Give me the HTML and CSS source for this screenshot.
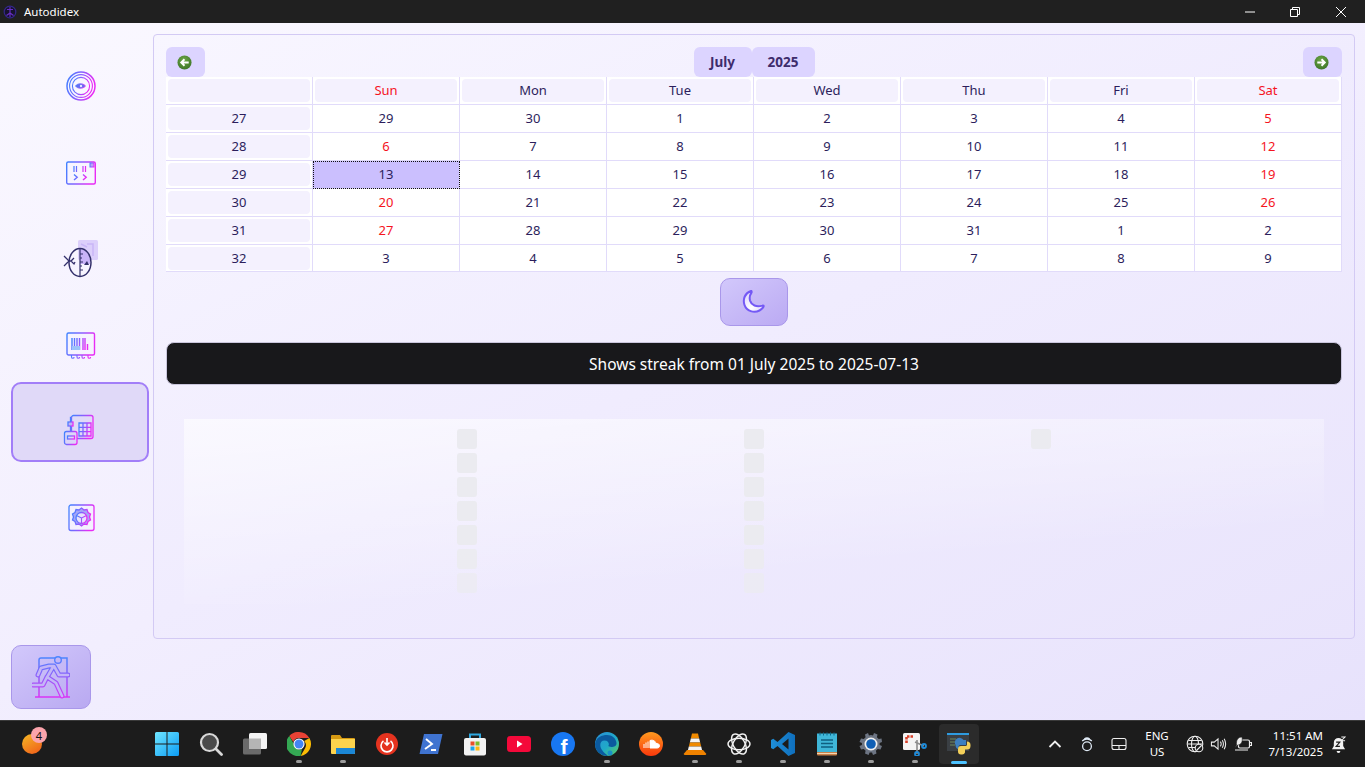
FILE: index.html
```html
<!DOCTYPE html>
<html lang="en">
<head>
<meta charset="utf-8">
<title>Autodidex</title>
<link rel="stylesheet" href="styles.css">
</head>
<body>
<svg class="defs" aria-hidden="true">
  <defs>
    <linearGradient id="gh" x1="0" y1="0" x2="1" y2="0.25"><stop offset="0" stop-color="#3f84ff"/><stop offset="0.5" stop-color="#8560ff"/><stop offset="1" stop-color="#e82cf5"/></linearGradient>
    <linearGradient id="gx" gradientUnits="userSpaceOnUse" x1="0" y1="2" x2="0" y2="44"><stop offset="0" stop-color="#4a86ff"/><stop offset="1" stop-color="#e030f5"/></linearGradient>
    <linearGradient id="moon" x1="0" y1="0" x2="1" y2="1"><stop offset="0" stop-color="#d8cdfd"/><stop offset="0.6" stop-color="#fff"/><stop offset="1" stop-color="#d8cdfd"/></linearGradient>
    <linearGradient id="win" x1="0" y1="0" x2="1" y2="1"><stop offset="0" stop-color="#6fe6ff"/><stop offset="1" stop-color="#0c9cf5"/></linearGradient>
    <linearGradient id="ball" x1="0.2" y1="0" x2="0.8" y2="1"><stop offset="0" stop-color="#f5b324"/><stop offset="1" stop-color="#f0601a"/></linearGradient>
    <linearGradient id="sc" x1="0" y1="0" x2="0" y2="1"><stop offset="0" stop-color="#ff9a1f"/><stop offset="1" stop-color="#f9380c"/></linearGradient>
    <linearGradient id="edge" x1="0" y1="0" x2="1" y2="1"><stop offset="0" stop-color="#2b8fd6"/><stop offset="0.55" stop-color="#1fa9c9"/><stop offset="1" stop-color="#5fd35a"/></linearGradient>
    <linearGradient id="vs" x1="0" y1="0" x2="1" y2="0"><stop offset="0" stop-color="#1f8fd8"/><stop offset="1" stop-color="#0f6fbd"/></linearGradient>
    <radialGradient id="orb" cx="0.45" cy="0.35" r="0.7"><stop offset="0" stop-color="#6ea848"/><stop offset="1" stop-color="#3b7326"/></radialGradient>
  </defs>
</svg>

<header class="titlebar">
  <svg class="app-logo" viewBox="0 0 14 14"><circle cx="7" cy="7" r="5.800" fill="#17122f" stroke="#33278a" stroke-width="1.200"/><path d="M7 2v10M4 4.500h6M3.500 10.500L7 8l3.500 2.500" fill="none" stroke="#6a2fc8" stroke-width="1.100"/></svg>
  <span class="app-name">Autodidex</span>
  <div class="win-controls">
    <svg class="wc wc-min" viewBox="0 0 12 12"><path d="M1 6h10" stroke="#fff" fill="none"/></svg>
    <svg class="wc wc-max" viewBox="0 0 12 12"><path d="M1.500 3.500h7v7h-7zM3.500 3.500v-2h7v7h-2" stroke="#fff" fill="none"/></svg>
    <svg class="wc wc-close" viewBox="0 0 12 12"><path d="M1 1l10 10M11 1L1 11" stroke="#fff" fill="none"/></svg>
  </div>
</header>

<div class="app">
  <aside class="sidebar">
    <nav class="nav">
      <div class="nav-item">
        <svg class="nav-icon" viewBox="0 0 30 30" fill="none" stroke="url(#gh)">
          <circle cx="15" cy="15" r="14" stroke-width="1.500"/><circle cx="15" cy="15" r="11.400" stroke-width="1.100"/><circle cx="15" cy="15" r="8.600" stroke-width="1.100"/>
          <path d="M9.500 15c2-2.800 7.500-3.200 10 0-2.500 3.200-8 2.800-10 0z" fill="#6070f0" stroke-width=".9"/><circle cx="15" cy="15" r="1.200" fill="#e9e6ff" stroke="none"/>
        </svg>
      </div>
      <div class="nav-item">
        <svg class="nav-icon" viewBox="0 0 30 30" fill="none" stroke="url(#gh)" stroke-width="1.400">
          <rect x="0.700" y="4" width="28.600" height="22" rx="1.500"/><path d="M2.400 4v22" stroke-width="1.700"/>
          <rect x="24" y="5" width="4" height="4" fill="#b9a6f9" stroke-width="1"/>
          <path d="M8 8v6M10.500 8v6M17 8v6M19.500 8v6" stroke-width="1.200"/><path d="M8 16.500l3.200 2.700L8 22M17 16.500l3.200 2.700L17 22" stroke-width="1.400"/>
        </svg>
      </div>
      <div class="nav-item">
        <svg class="nav-icon nav-icon-tall" viewBox="0 0 36 42" fill="none">
          <rect x="15" y="1" width="20" height="20" rx="1.500" fill="#dccffb"/><path d="M18 5l6 3M24 5h6v12" stroke="#c9b6f7" stroke-width="1.500"/>
          <path d="M17 9.500a10.500 14 0 0 1 10 11.500v4H17z" fill="#c9b3f8"/>
          <ellipse cx="17" cy="23.500" rx="11" ry="14" stroke="#33306b" stroke-width="1.500"/>
          <path d="M17 9.500v28M17 15h3M17 19h2M17 23h3M17 27h2M17 31h3" stroke="#33306b" stroke-width="1.200"/>
          <path d="M1 17l5 5-5 5M5 22h3l3-3M8 22l3 3 1-2" stroke="#33306b" stroke-width="1.300"/><path d="M21 26l3-4 2 4z" fill="#33306b"/>
        </svg>
      </div>
      <div class="nav-item">
        <svg class="nav-icon" viewBox="0 0 30 30" fill="none" stroke="url(#gh)" stroke-width="1.400">
          <rect x="1" y="3" width="27.500" height="22" rx="1.500"/><path d="M1 5.200h27.500" stroke-width="1.800"/>
          <path d="M6 8v12M8.500 8v12M11 8v12M13.500 8v12M17 8v12M19 8v12M21.500 14v6" stroke-width="1.400"/>
          <path d="M6 16h8v4H6z" fill="#9dc3fa" stroke="none"/>
          <path d="M5.500 25v2a1.300 1.300 0 0 0 2.600 0M11 25v2a1.300 1.300 0 0 0 2.600 0M16 25v2a1.300 1.300 0 0 0 2.600 0M22 25v2a1.300 1.300 0 0 0 2.600 0" stroke-width="1.100"/>
        </svg>
      </div>
      <div class="nav-item nav-item-active">
        <svg class="nav-icon nav-icon-table" viewBox="0 0 32 32" fill="none" stroke="url(#gh)" stroke-width="1.300">
          <rect x="8.500" y="1.500" width="21.500" height="23" rx="2"/>
          <path d="M16 9h12v13H16zM16 13.300h12M16 17.700h12M20 9v13M24 9v13"/>
          <rect x="5" y="8" width="5" height="4" fill="#b9b6f5"/><path d="M7.500 12v5.500M7.500 8V3.500h1"/>
          <rect x="1.500" y="17.500" width="12.500" height="13" rx="2" fill="#dcd5f8"/><rect x="4.500" y="22" width="7" height="3"/>
        </svg>
      </div>
      <div class="nav-item">
        <svg class="nav-icon" viewBox="0 0 30 30" fill="none" stroke="url(#gh)" stroke-width="1.300">
          <rect x="3" y="2" width="25" height="25.500" rx="2"/>
          <path d="M15.500 5l2.500 2 3-.5 1 3 2.500 1.500-1 3 1 3-2.500 1.500-1 3-3-.5-2.500 2-2.500-2-3 .5-1-3-2.500-1.500 1-3-1-3 2.500-1.500 1-3 3 .5z" fill="#a4a6f8"/>
          <circle cx="15.500" cy="15" r="5.500" fill="#e6e2fd"/><path d="M15.500 15v5.500M15.500 15l-5-2.500M15.500 15l5-2.500" stroke-width="1.100"/>
        </svg>
      </div>
    </nav>
    <button class="exit-btn" type="button" aria-label="Exit">
      <svg class="exit-icon" viewBox="0 0 38 44" fill="none">
        <path d="M7 42V5a2 2 0 0 1 2-2h26v39M3 42h35" stroke="url(#gx)" stroke-width="1.500"/>
        <circle cx="26" cy="5" r="3.300" fill="#c4b6f7" stroke="url(#gx)" stroke-width="1.400"/>
        <path d="M6 20l3-7 8-2h5l5 9h9M21 12l-7 12-3 6H1M15 22l9 6 6 13" stroke="url(#gx)" stroke-width="5" stroke-linecap="round" stroke-linejoin="round"/>
        <path d="M6 20l3-7 8-2h5l5 9h9M21 12l-7 12-3 6H1M15 22l9 6 6 13" stroke="#c4b6f7" stroke-width="2.600" stroke-linecap="round" stroke-linejoin="round"/>
      </svg>
    </button>
  </aside>

  <main class="panel">
    <div class="cal-head">
      <button class="nav-btn" type="button" aria-label="Previous month">
        <svg class="arrow" viewBox="0 0 16 16"><circle cx="8" cy="8" r="7.500" fill="url(#orb)"/><path d="M12.500 8H5M8 4.500L4.500 8 8 11.500" fill="none" stroke="#fff" stroke-width="2"/></svg>
      </button>
      <div class="cal-title"><span class="month">July</span><span class="year">2025</span></div>
      <button class="nav-btn" type="button" aria-label="Next month">
        <svg class="arrow" viewBox="0 0 16 16"><circle cx="8" cy="8" r="7.500" fill="url(#orb)"/><path d="M3.500 8H11M8 4.500L11.500 8 8 11.500" fill="none" stroke="#fff" stroke-width="2"/></svg>
      </button>
    </div>

    <div class="calendar">
      <div class="cell"><span class="chip"></span></div>
      <div class="cell"><span class="chip red">Sun</span></div>
      <div class="cell"><span class="chip">Mon</span></div>
      <div class="cell"><span class="chip">Tue</span></div>
      <div class="cell"><span class="chip">Wed</span></div>
      <div class="cell"><span class="chip">Thu</span></div>
      <div class="cell"><span class="chip">Fri</span></div>
      <div class="cell"><span class="chip red">Sat</span></div>

      <div class="cell"><span class="chip">27</span></div>
      <div class="cell">29</div><div class="cell">30</div><div class="cell">1</div><div class="cell">2</div><div class="cell">3</div><div class="cell">4</div><div class="cell red">5</div>

      <div class="cell"><span class="chip">28</span></div>
      <div class="cell red">6</div><div class="cell">7</div><div class="cell">8</div><div class="cell">9</div><div class="cell">10</div><div class="cell">11</div><div class="cell red">12</div>

      <div class="cell"><span class="chip">29</span></div>
      <div class="cell selected">13</div><div class="cell">14</div><div class="cell">15</div><div class="cell">16</div><div class="cell">17</div><div class="cell">18</div><div class="cell red">19</div>

      <div class="cell"><span class="chip">30</span></div>
      <div class="cell red">20</div><div class="cell">21</div><div class="cell">22</div><div class="cell">23</div><div class="cell">24</div><div class="cell">25</div><div class="cell red">26</div>

      <div class="cell"><span class="chip">31</span></div>
      <div class="cell red">27</div><div class="cell">28</div><div class="cell">29</div><div class="cell">30</div><div class="cell">31</div><div class="cell">1</div><div class="cell">2</div>

      <div class="cell"><span class="chip">32</span></div>
      <div class="cell">3</div><div class="cell">4</div><div class="cell">5</div><div class="cell">6</div><div class="cell">7</div><div class="cell">8</div><div class="cell">9</div>
    </div>

    <button class="moon-btn" type="button" aria-label="Streak">
      <svg class="moon-icon" viewBox="0 0 26 26"><path d="M10 2C4 4 1.500 10 3.500 16c2 6 9.500 8.500 15 5.500 1.800-1 3.200-2.300 4-3.800.5-1-.3-1.400-1.200-1.100-6 1.800-10.800-.3-12.300-5-.7-2.800-.2-5.600 1.500-8 .5-1-.2-1.900-.5-1.600z" fill="url(#moon)" stroke="#7459f5" stroke-width="2" stroke-linejoin="round"/></svg>
    </button>

    <div class="streak-bar">Shows streak from 01 July 2025 to 2025-07-13</div>

    <div class="heat">
      <div class="heat-col"><i></i><i></i><i></i><i></i><i></i><i></i><i></i></div>
      <div class="heat-col"><i></i><i></i><i></i><i></i><i></i><i></i><i></i></div>
      <div class="heat-col"><i></i></div>
    </div>
  </main>
</div>

<footer class="taskbar">
  <div class="widget">
    <svg class="ball" viewBox="0 0 20 20"><circle cx="10" cy="10" r="10" fill="url(#ball)"/></svg>
    <span class="badge">4</span>
  </div>

  <div class="tb-items">
    <div class="tb-item">
      <svg class="tb-icon" viewBox="0 0 24 24"><path d="M0 1.500A1.500 1.500 0 0 1 1.500 0h10v11.500H0zM12.500 0h10A1.500 1.500 0 0 1 24 1.500v10H12.500zM0 12.500h11.500V24h-10A1.500 1.500 0 0 1 0 22.500zM12.500 12.500H24v10a1.500 1.500 0 0 1-1.500 1.500h-10z" fill="url(#win)"/></svg>
    </div>
    <div class="tb-item">
      <svg class="tb-icon" viewBox="0 0 24 24" fill="none"><circle cx="10.500" cy="10.500" r="8.500" fill="#4a4a4a" stroke="#d8d8d8" stroke-width="2.200"/><path d="M17 17l5.500 5.500" stroke="#d8d8d8" stroke-width="2.800" stroke-linecap="round"/></svg>
    </div>
    <div class="tb-item">
      <svg class="tb-icon" viewBox="0 0 24 24"><rect x="0" y="6.500" width="18" height="16" rx="1.500" fill="#6a6a6a"/><rect x="6" y="1" width="18" height="16" rx="1.500" fill="#f4f4f4"/><rect x="6" y="6.500" width="12" height="10.500" fill="#b5b5b5"/></svg>
    </div>
    <div class="tb-item running">
      <svg class="tb-icon" viewBox="0 0 24 24"><path d="M12 0a12 12 0 0 1 10.400 6H12a6 6 0 0 0-5.700 4.100L2.300 4A12 12 0 0 1 12 0z" fill="#e94235"/><path d="M22.400 6a12 12 0 0 1-8.800 17.900l4.600-8A6 6 0 0 0 17.200 9z" fill="#fbbc04"/><path d="M13.600 23.900A12 12 0 0 1 2.300 4l4.200 7.500A6 6 0 0 0 15 17z" fill="#34a853"/><circle cx="12" cy="12" r="5.600" fill="#fff"/><circle cx="12" cy="12" r="4.500" fill="#4285f4"/></svg>
    </div>
    <div class="tb-item running">
      <svg class="tb-icon" viewBox="0 0 24 24"><path d="M0 4a1 1 0 0 1 1-1h8l2 3h12a1 1 0 0 1 1 1v3H0z" fill="#d69a12"/><path d="M0 7h24v14a1 1 0 0 1-1 1H1a1 1 0 0 1-1-1z" fill="#fcd34d"/><path d="M5 16h19v5a1 1 0 0 1-1 1H5z" fill="#1b87d6"/></svg>
    </div>
    <div class="tb-item">
      <svg class="tb-icon" viewBox="0 0 24 24" fill="none"><circle cx="12" cy="12" r="11" fill="#e5331f"/><path d="M8.500 9a6 6 0 1 0 7 0" stroke="#fff" stroke-width="1.600"/><path d="M12 6v6M9.500 10.500L12 13l2.500-2.500" stroke="#fff" stroke-width="1.600"/></svg>
    </div>
    <div class="tb-item">
      <svg class="tb-icon" viewBox="0 0 24 24" fill="none"><path d="M5 2h18.500L19 22H0.500z" fill="#3f73d0"/><path d="M7 7l6 5-7 5M12 18h5" stroke="#fff" stroke-width="1.900"/></svg>
    </div>
    <div class="tb-item">
      <svg class="tb-icon" viewBox="0 0 24 24" fill="none"><path d="M7 7V2.500h10V7" stroke="#2fa8e0" stroke-width="2"/><rect x="1" y="6" width="22" height="17.500" rx="2" fill="#f2f2f2"/><rect x="7.500" y="9.500" width="4" height="4" fill="#e8502a"/><rect x="12.500" y="9.500" width="4" height="4" fill="#7cbb2a"/><rect x="7.500" y="14.500" width="4" height="4" fill="#1ea4ea"/><rect x="12.500" y="14.500" width="4" height="4" fill="#fdb813"/></svg>
    </div>
    <div class="tb-item">
      <svg class="tb-icon" viewBox="0 0 24 24"><rect y="4" width="24" height="16" rx="3.500" fill="#f4093a"/><path d="M10 8.500l5.500 3.500-5.500 3.500z" fill="#fff"/></svg>
    </div>
    <div class="tb-item">
      <svg class="tb-icon" viewBox="0 0 24 24"><circle cx="12" cy="12" r="12" fill="#1877f2"/><text class="fb-f" x="13" y="21.500" text-anchor="middle">f</text></svg>
    </div>
    <div class="tb-item running">
      <svg class="tb-icon" viewBox="0 0 24 24"><circle cx="12" cy="12" r="12" fill="url(#edge)"/><path d="M0 12C1 5 7 3 12 3c5 0 9 3 9.500 8 .2 3-2.500 4-5 4-2 0-3.500-.5-3-1.500 1-1.500 0-5-4-5C5 8.500 4 14 7 18c1.500 2.500 4 4 6 5.900A12 12 0 0 1 0 12z" fill="#0b5a9f"/><circle cx="15" cy="21" r="2.500" fill="#1a8fc8"/></svg>
    </div>
    <div class="tb-item">
      <svg class="tb-icon" viewBox="0 0 24 24"><circle cx="12" cy="12" r="12" fill="url(#sc)"/><path d="M5 16v-4M7 16v-5.500M9 16V9.500M11 16V8.500c3-1 5.500.5 6 3 2-.5 3.500.8 3.500 2.300S19.500 16 18 16z" fill="#fff" stroke="#fff" stroke-width="1"/></svg>
    </div>
    <div class="tb-item running">
      <svg class="tb-icon" viewBox="0 0 24 24"><path d="M9 1.500h6l1.200 5H7.800z" fill="#f08a00"/><path d="M7.800 6.500h8.400l1 4H6.800z" fill="#f4f4f4"/><path d="M6.800 10.500h10.400l1 4H5.800z" fill="#f08a00"/><path d="M5.800 14.500h12.400l1.200 5H4.600z" fill="#f4f4f4"/><path d="M4 18h16l3 3.500a1 1 0 0 1-.8 1.500H1.800a1 1 0 0 1-.8-1.500z" fill="#ef8200"/></svg>
    </div>
    <div class="tb-item running">
      <svg class="tb-icon" viewBox="0 0 24 24" fill="none" stroke="#f2f2f2" stroke-width="1.400"><ellipse cx="12" cy="12" rx="11" ry="5.800"/><ellipse cx="12" cy="12" rx="11" ry="5.800" transform="rotate(60 12 12)"/><ellipse cx="12" cy="12" rx="11" ry="5.800" transform="rotate(120 12 12)"/></svg>
    </div>
    <div class="tb-item running">
      <svg class="tb-icon" viewBox="0 0 24 24"><path d="M17.500 0L24 3v18l-6.500 3-11-10-4.200 3.200L0 16V8l2.300-1.200 4.200 3.200zM17.500 6.500L11 12l6.500 5.500z" fill="url(#vs)" fill-rule="evenodd"/></svg>
    </div>
    <div class="tb-item running">
      <svg class="tb-icon" viewBox="0 0 24 24"><rect x="2" y="1.500" width="20" height="20" fill="#3fb6d8"/><path d="M2 20h20v2.500a1 1 0 0 1-1 1H3a1 1 0 0 1-1-1z" fill="#c8814a"/><path d="M2 21.500h20" stroke="#f2d6b0"/><path d="M6 8h12M6 11.500h12M6 15h12" stroke="#0f5f80" stroke-width="1.500"/><path d="M5 .5v3M8.500 .5v3M12 .5v3M15.500 .5v3M19 .5v3" stroke="#0c6a8e"/></svg>
    </div>
    <div class="tb-item running">
      <svg class="tb-icon" viewBox="0 0 24 24"><path fill-rule="evenodd" d="M9 1l1 2.500 2-.5 2 .5 1-2.500 3.500 1.500-.6 2.800 1.800 1.800 2.800-.6L23 10l-2.400 1v2l2.400 1-1.500 3.500-2.800-.6-1.800 1.800.6 2.800-3.500 1.500-1-2.500h-2.400L9.600 23 6 21.500l.6-2.800-1.800-1.800-2.800.6L.5 14l2.400-1v-2L.5 10 2 6.500l2.800.6 1.800-1.800L6 2.500z" fill="#6d7583"/><circle cx="12" cy="12" r="6.500" fill="#f0f0f0"/><circle cx="12" cy="12" r="4.800" fill="#0f5fb5"/></svg>
    </div>
    <div class="tb-item running">
      <svg class="tb-icon" viewBox="0 0 24 24" fill="none"><rect x="0" y="1" width="17" height="17" rx="1.500" fill="#f4f4f4"/><path d="M3.500 11V4.500H10" stroke="#d8402a" stroke-width="2.600" stroke-dasharray="2.500 1"/><path d="M12 10l9 4M14 8v14" stroke="#8d8d8d" stroke-width="1.600"/><circle cx="21" cy="14" r="2" stroke="#1d8ad8" stroke-width="1.800"/><circle cx="14" cy="22" r="2" stroke="#1d8ad8" stroke-width="1.800"/></svg>
    </div>
    <div class="tb-item active">
      <svg class="tb-icon" viewBox="0 0 24 24"><rect x="0" y="1" width="22" height="18" fill="#3a3f44"/><rect x="0" y="1" width="22" height="2" fill="#2e9be0"/><path d="M3 7h6M3 10h8M3 13h5" stroke="#6d8a5e"/><path d="M13 13h6V8h-2.500A3.500 3.500 0 0 0 8.500 13c0 2 1 4 3 4v-2a2 2 0 0 1 1.500-2z" fill="#3d7fc0"/><path d="M20 9.500a3.500 3.500 0 0 1 3.500 3.500v1a3.500 3.500 0 0 1-3.500 3.500h-2v3a3 3 0 0 1-3 2h-1a3 3 0 0 1-3-3V17a3 3 0 0 1 3-3h4a1.500 1.500 0 0 0 2-1.500z" fill="#f3d05a"/></svg>
    </div>
  </div>

  <div class="tray">
    <svg class="tray-icon chevron" viewBox="0 0 16 16" fill="none"><path d="M2.500 11L8 5.500l5.500 5.500" stroke="#eee" stroke-width="1.800"/></svg>
    <svg class="tray-icon net" viewBox="0 0 16 18" fill="none" stroke="#dfe9f5" stroke-width="1.500"><circle cx="8" cy="11.500" r="5"/><path d="M2.500 5.500a8 8 0 0 1 11 0M5 3a6 6 0 0 1 6 0"/></svg>
    <svg class="tray-icon pad" viewBox="0 0 16 14" fill="none" stroke="#eee" stroke-width="1.100"><rect x="1" y="1.500" width="14" height="11" rx="2"/><path d="M1 8.500h14M8 8.500v4"/></svg>
    <div class="lang"><span>ENG</span><span>US</span></div>
    <svg class="tray-icon globe" viewBox="0 0 18 18" fill="none" stroke="#eee" stroke-width="1.100"><circle cx="9" cy="9" r="7.800"/><ellipse cx="9" cy="9" rx="3.500" ry="7.800"/><path d="M1.500 9h15M2.500 5.500h13M2.500 12.500h8"/><circle cx="13" cy="13" r="3.800" fill="#1c1c1c"/><path d="M10.500 15.500l5-5"/></svg>
    <svg class="tray-icon vol" viewBox="0 0 18 16" fill="none" stroke="#eee" stroke-width="1.100"><path d="M1.500 6h3L8.500 2.500v11L4.500 10h-3zM11 5.500c1 1.500 1 3.500 0 5M13 4c1.500 2.500 1.500 5.500 0 8M15 2.500c2 3.500 2 7.500 0 11"/></svg>
    <svg class="tray-icon batt" viewBox="0 0 18 16" fill="none" stroke="#eee" stroke-width="1.200"><rect x="4.500" y="4" width="11" height="8" rx="1.500"/><path d="M15.500 6.500h2v3h-2M1 14h13"/><path d="M8 1C4 1 2 4 2.500 9L1 11.500 3.500 9C7 9 9 6 8 1z" fill="#eee" stroke="#1c1c1c" stroke-width=".6"/></svg>
    <div class="clock"><span>11:51 AM</span><span>7/13/2025</span></div>
    <svg class="tray-icon bell" viewBox="0 0 16 18"><path d="M8 2a5 5 0 0 0-5 5v3.500L1 14h14l-2-3.500V7a5 5 0 0 0-5-5z" fill="#f2f2f2"/><path d="M6 16a2 2 0 0 0 4 0z" fill="#f2f2f2"/><path d="M5.500 6.500h4l-4 4.500h4" fill="none" stroke="#1c1c1c" stroke-width="1.200"/><path d="M11 1h4l-4 4h4" fill="none" stroke="#f2f2f2" stroke-width="1.100"/></svg>
  </div>
</footer>
</body>
</html>
```
FILE: styles.css
```css
*, *::before, *::after { box-sizing: border-box; }

html, body { margin: 0; padding: 0; }

body {
  width: 1365px;
  height: 767px;
  overflow: hidden;
  display: flex;
  flex-direction: column;
  font-family: "Noto Sans", "Open Sans", sans-serif;
  color: #2c1e5c;
}

.defs { width: 0; height: 0; position: absolute; }

/* title bar */
.titlebar {
  height: 23px;
  flex: none;
  display: flex;
  align-items: center;
  padding-left: 3px;
  background: #202020;
  color: #fff;
  font-size: 11.5px;
}
.app-logo { width: 14px; height: 14px; margin-right: 7px; }
.win-controls { margin-left: auto; display: flex; align-items: center; padding-right: 18px; }
.wc { width: 12px; height: 12px; display: block; }
.wc-min { margin-right: 33px; }
.wc-max { margin-right: 34px; }

/* app */
.app {
  height: 697px;
  flex: none;
  display: flex;
  background: linear-gradient(155deg, #faf8ff 0%, #f2eefe 50%, #e7e2fc 100%);
}

.sidebar {
  width: 153px;
  flex: none;
  display: flex;
  flex-direction: column;
  padding-top: 20px;
}
.nav { display: flex; flex-direction: column; }
.nav-item {
  position: relative;
  height: 86.4px;
  display: flex;
  align-items: center;
  justify-content: center;
  padding-left: 8px;
}
.nav-item-active::before {
  content: "";
  position: absolute;
  left: 11px;
  top: -6.6px;
  width: 138px;
  height: 80px;
  border: 2px solid #a27ef8;
  border-radius: 10px;
  background: #e0d9f8;
}
.nav-icon { width: 30px; height: 30px; position: relative; display: block; }
.nav-icon-tall { width: 36px; height: 42px; margin-top: 3px; }
.nav-icon-table { width: 32px; height: 32px; margin: -3px 0 0 -3px; }

.exit-btn {
  margin: auto 0 11px 11px;
  width: 80px;
  height: 64px;
  padding: 0;
  display: flex;
  align-items: center;
  justify-content: center;
  border: 1px solid #a997ea;
  border-radius: 10px;
  background: linear-gradient(145deg, #d2c8fb, #b9a9f1);
}
.exit-icon { width: 38px; height: 44px; display: block; }

/* main panel */
.panel {
  width: 1202px;
  height: 605px;
  margin-top: 11px;
  padding: 12px;
  border: 1px solid #d3caf4;
  border-radius: 4px;
  display: flex;
  flex-direction: column;
  background: linear-gradient(155deg, #f8f6ff 0%, #f0ecfe 50%, #e9e4fc 100%);
}

.cal-head {
  height: 30px;
  flex: none;
  display: flex;
  align-items: stretch;
  justify-content: space-between;
}
.nav-btn {
  width: 39px;
  padding: 0 2px 0 0;
  border: 0;
  border-radius: 6px;
  background: #dcd4ff;
  display: flex;
  align-items: center;
  justify-content: center;
}
.arrow { width: 15px; height: 15px; display: block; }
.cal-title { display: flex; font-size: 13.5px; font-weight: 700; color: #3e2c6c; }
.month, .year {
  display: flex;
  align-items: center;
  justify-content: center;
  background: #dcd4ff;
  border-radius: 6px;
}
.month { width: 58px; }
.year { width: 63px; }

/* calendar */
.calendar {
  flex: none;
  display: grid;
  grid-template-columns: repeat(8, 147px);
  grid-template-rows: repeat(6, 28px) 27px;
  width: 1176px;
  background: #fff;
  font-size: 13px;
}
.cell {
  display: flex;
  align-items: center;
  justify-content: center;
  padding-bottom: 1px;
  border-right: 1px solid #e1dbfa;
  border-bottom: 1px solid #e1dbfa;
}
.cell:nth-last-child(-n+8) { padding-bottom: 0; }
.chip {
  width: 142px;
  height: 23px;
  margin-top: 1px;
  padding-bottom: 1px;
  border-radius: 4px;
  background: #f4f1fe;
  display: flex;
  align-items: center;
  justify-content: center;
}
.red { color: #f5141e; }
.selected {
  background: #cbbffe;
  outline: 1px dotted #111;
  outline-offset: -1px;
}

.moon-btn {
  flex: none;
  align-self: center;
  width: 68px;
  height: 48px;
  margin-top: 6px;
  padding: 0;
  display: flex;
  align-items: center;
  justify-content: center;
  border: 1px solid #a997ea;
  border-radius: 10px;
  background: linear-gradient(145deg, #d2c8fb, #bbaaf3);
}
.moon-icon { width: 26px; height: 26px; display: block; }

.streak-bar {
  flex: none;
  height: 43px;
  margin-top: 16px;
  display: flex;
  align-items: center;
  justify-content: center;
  border: 1px solid #c9c5dc;
  border-radius: 8px;
  background: #18181b;
  color: #fff;
  font-size: 15.5px;
}

.heat {
  flex: none;
  height: 185px;
  margin: 34px 18px 0;
  padding: 10px 0 0 273px;
  display: flex;
  gap: 267px;
  background: linear-gradient(175deg, rgba(255,255,255,.62) 0%, rgba(255,255,255,0) 72%);
}
.heat-col { width: 20px; display: flex; flex-direction: column; gap: 4px; }
.heat-col i {
  display: block;
  width: 20px;
  height: 20px;
  border-radius: 3px;
  background: #ebebf0;
}
.heat-col i:nth-child(6) { opacity: .9; }
.heat-col i:nth-child(7) { opacity: .7; }

/* taskbar */
.taskbar {
  height: 47px;
  flex: none;
  display: flex;
  align-items: flex-start;
  padding-top: 3px;
  background: #1c1c1c;
  border-top: 1px solid #3a3a3a;
  color: #fff;
  font-family: "Noto Sans", "Open Sans", sans-serif;
}
.widget { width: 147px; height: 40px; flex: none; position: relative; }
.ball { position: absolute; left: 22px; top: 10px; width: 20px; height: 20px; }
.badge {
  position: absolute;
  left: 31px;
  top: 3px;
  width: 16px;
  height: 16px;
  border-radius: 50%;
  background: #fba4ac;
  color: #111;
  font-size: 11px;
  display: flex;
  align-items: center;
  justify-content: center;
}
.tb-items { display: flex; gap: 4px; flex: none; }
.tb-item {
  position: relative;
  width: 40px;
  height: 40px;
  display: flex;
  align-items: center;
  justify-content: center;
  border-radius: 4px;
}
.tb-icon { width: 24px; height: 24px; display: block; }
.fb-f { font-family: "Liberation Sans", sans-serif; font-weight: 700; font-size: 21px; fill: #fff; }
.running::after {
  content: "";
  position: absolute;
  left: 17px;
  bottom: 1px;
  width: 6px;
  height: 3px;
  border-radius: 2px;
  background: #9b9b9b;
}
.active { background: #2b2b2b; }
.active::after {
  content: "";
  position: absolute;
  left: 12px;
  bottom: 0;
  width: 16px;
  height: 3px;
  border-radius: 2px;
  background: #4cc2ff;
}

.tray {
  margin-left: auto;
  height: 40px;
  display: flex;
  align-items: center;
  padding-right: 19px;
  font-size: 11.5px;
}
.tray-icon { display: block; flex: none; }
.chevron { width: 16px; height: 16px; margin-right: 17px; }
.net { width: 14px; height: 16px; margin-right: 17px; }
.pad { width: 16px; height: 14px; margin-right: 17px; }
.lang { width: 26px; margin-right: 16px; display: flex; flex-direction: column; align-items: center; line-height: 16px; }
.globe { width: 18px; height: 18px; margin-right: 6px; }
.vol { width: 17px; height: 16px; margin-right: 7px; }
.batt { width: 18px; height: 16px; margin-right: 15px; }
.clock { width: 56px; margin-right: 8px; display: flex; flex-direction: column; align-items: flex-end; line-height: 16px; white-space: nowrap; }
.bell { width: 15px; height: 17px; }
```
